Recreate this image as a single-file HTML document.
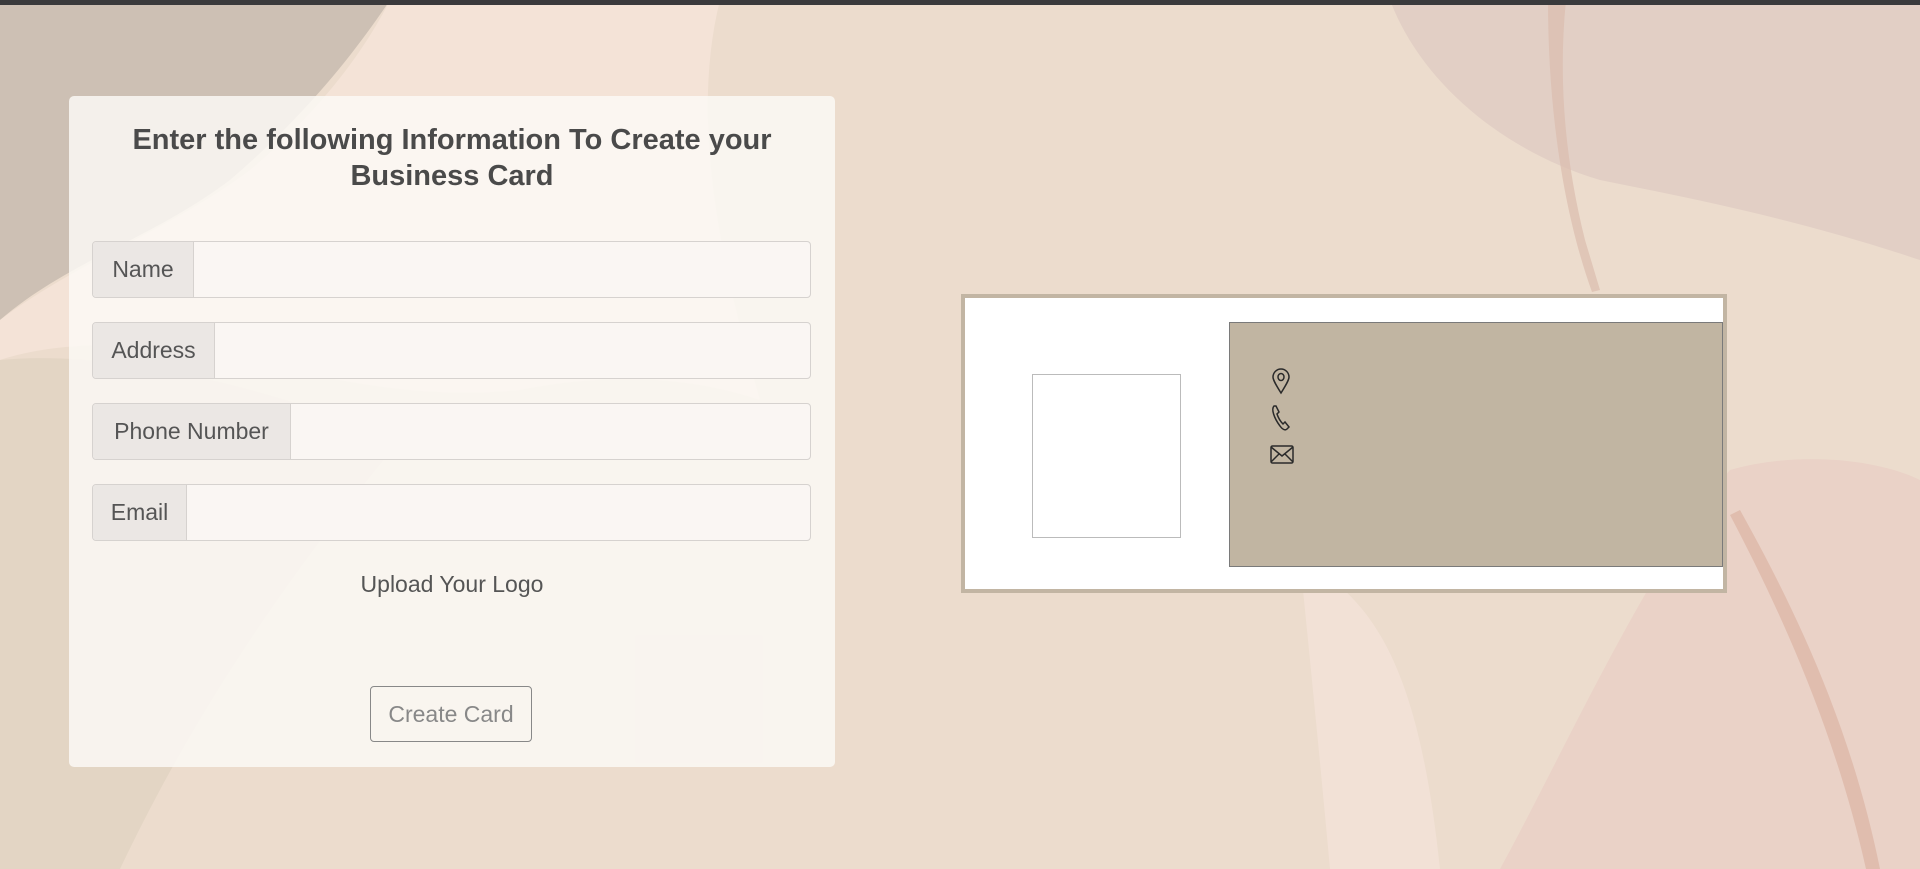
<!DOCTYPE html>
<html><head><meta charset="utf-8"><style>
html,body{margin:0;padding:0;width:1920px;height:869px;overflow:hidden;font-family:"Liberation Sans",sans-serif;}
body{position:relative;background:#ecdccd;}
.bg{position:absolute;left:0;top:0;}
.bar{position:absolute;left:0;top:0;width:1920px;height:5px;background:#3a3a3c;}
.panel{position:absolute;left:69px;top:96px;width:766px;height:671px;background:rgba(252,249,246,0.84);border-radius:5px;}
h1{position:absolute;left:0;top:26px;width:766px;margin:0;text-align:center;font-size:29px;line-height:36px;font-weight:bold;color:#4a4a4a;}
.grp{position:absolute;left:23px;width:717px;height:55px;border:1px solid #d6d2cf;border-radius:4px;background:rgba(250,246,243,0.9);overflow:hidden;}
.grp span{position:absolute;left:0;top:0;height:55px;line-height:55px;background:#ebe7e4;border-right:1px solid #d6d2cf;color:#555;font-size:23px;text-align:center;}
.up{position:absolute;left:0;width:766px;top:475px;text-align:center;font-size:23px;color:#555;}
.btn{position:absolute;left:301px;top:590px;width:162px;height:56px;border:1px solid #888;border-radius:4px;box-sizing:border-box;text-align:center;line-height:54px;font-size:23px;color:#888;}
.card{position:absolute;left:961px;top:294px;width:766px;height:299px;box-sizing:border-box;border:4px solid #c2b5a3;background:#fff;}
.logo{position:absolute;left:1032px;top:374px;width:149px;height:164px;box-sizing:border-box;border:1px solid #bbb;}
.tan{position:absolute;left:1229px;top:322px;width:494px;height:245px;box-sizing:border-box;border:1px solid #7a7a7a;background:#c1b5a2;}
</style></head><body>
<svg class="bg" width="1920" height="869" viewBox="0 0 1920 869">
<path d="M0 0H390C350 60 300 120 230 180C150 240 70 260 0 320Z" fill="#cdc0b4"/>
<path d="M390 0H720C690 120 720 260 760 400C700 380 620 370 520 390C420 400 330 380 250 360C150 340 60 340 0 360V320C80 260 170 230 250 170C310 120 360 60 390 0Z" fill="#f4e3d7"/>
<path d="M0 360C100 350 250 380 400 440C300 560 200 700 120 869H0Z" fill="#e3d5c4"/>
<path d="M1390 0H1920V260C1800 220 1700 200 1600 180C1500 150 1420 80 1390 0Z" fill="#e2cfc5"/>
<path d="M1300 560C1380 600 1420 680 1440 869H1330C1320 760 1310 660 1300 560Z" fill="#f2e1d6"/>
<path d="M1730 470C1800 450 1880 460 1920 480V869H1500C1560 760 1650 560 1730 470Z" fill="#ead2c7"/>
<path d="M1548 0H1566C1558 80 1565 160 1585 240L1600 290L1592 292C1566 220 1548 120 1548 0Z" fill="#dcbcae" opacity=".7"/>
<path d="M1740 510C1790 600 1850 720 1880 869H1866C1835 730 1780 610 1730 515Z" fill="#dcb3a4" opacity=".7"/>
</svg>
<div class="bar"></div>
<div class="panel">
<h1>Enter the following Information To Create your<br>Business Card</h1>
<div class="grp" style="top:145px"><span style="width:100px">Name</span></div>
<div class="grp" style="top:226px"><span style="width:121px">Address</span></div>
<div class="grp" style="top:307px"><span style="width:197px">Phone Number</span></div>
<div class="grp" style="top:388px"><span style="width:93px">Email</span></div>
<div class="up">Upload Your Logo</div>
<div class="btn">Create Card</div>
</div>
<div class="card"></div>
<div class="logo"></div>
<div class="tan"></div>
<svg style="position:absolute;left:1268px;top:368px" width="30" height="100" viewBox="0 0 30 100" fill="none" stroke="#2a2a2a" stroke-width="1.5">
<path d="M13 25C8 17 5 12 5 9A8 8 0 0 1 21 9C21 12 18 17 13 25Z"/><ellipse cx="13" cy="9" rx="3" ry="3.5"/>
<path d="M6 38C3 41 6 50 12 58C14 61 17 63 19 61L21 59L17 54L15 56C12 53 10 49 9 46L11 44L8 38Z"/>
<rect x="3" y="78" width="22" height="17" rx="1.5"/><path d="M3 79L14 88L25 79M3 94L11 86M25 94L17 86"/>
</svg>
</body></html>
